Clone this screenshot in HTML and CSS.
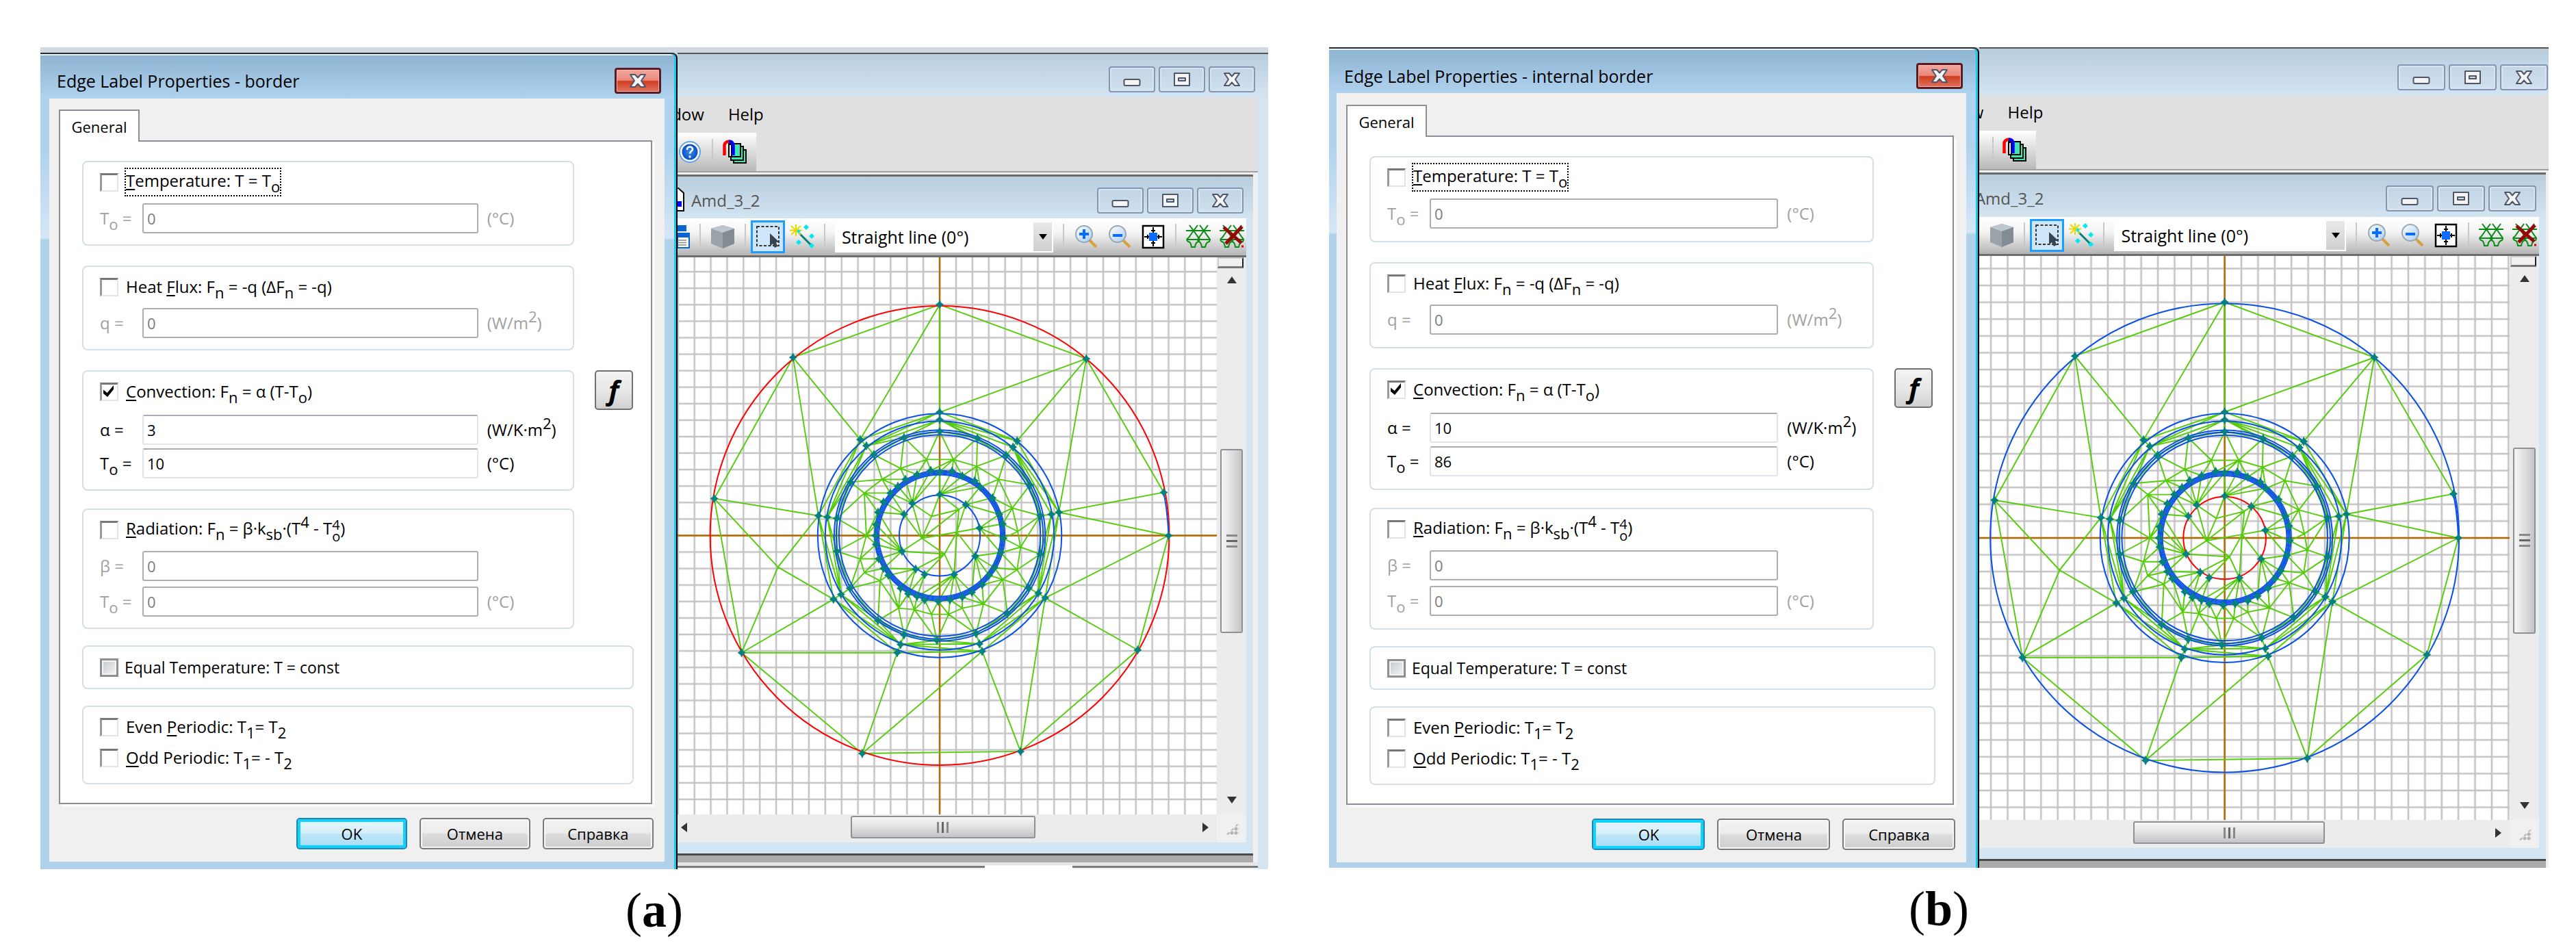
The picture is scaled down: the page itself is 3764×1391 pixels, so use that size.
FILE: index.html
```html
<!DOCTYPE html>
<html lang="ru">
<head>
<meta charset="utf-8">
<title>Edge Label Properties</title>
<link rel="stylesheet" href="styles.css">
<script src="mesh.js" defer></script>
</head>
<body>
<svg class="defs" aria-hidden="true">
  <defs>
    <pattern id="grid" width="23.86" height="24.06" patternUnits="userSpaceOnUse">
      <path class="grid-line" d="M0 0H24M0 24.06H24M0 0V25M23.86 0V25"/>
    </pattern>
    <linearGradient id="lens" x1="0" y1="0" x2="1" y2="1"><stop offset="0" stop-color="#fff"/><stop offset="1" stop-color="#a9cdf0"/></linearGradient>
    <radialGradient id="ball"><stop offset="0" stop-color="#3f8cf0"/><stop offset="1" stop-color="#0a4fc4"/></radialGradient>
    <symbol id="mesh" viewBox="-420 -420 840 840" overflow="visible"></symbol>
    <symbol id="min" viewBox="0 0 26 22"><rect x="1.500" y="11" width="23" height="9" rx="2" fill="#f4f4f4" stroke="#4f5668" stroke-width="2"/></symbol>
    <symbol id="max" viewBox="0 0 26 22"><path d="M2 2h22v18H2zM8 9v4h10V9z" fill="#f4f4f4" fill-rule="evenodd" stroke="#4f5668" stroke-width="2" stroke-linejoin="round"/></symbol>
    <symbol id="x" viewBox="0 0 26 22"><path d="M2 2h7l4 4.500L17 2h7l-6 9 6 9h-7l-4-4.500L9 20H2l6-9z" fill="#f4f4f4" stroke="#4f5668" stroke-width="2" stroke-linejoin="round"/></symbol>
    <symbol id="help" viewBox="0 0 36 36"><circle cx="18" cy="18" r="15" fill="#fff" stroke="#5fa4e8" stroke-width="2"/><circle cx="18" cy="18" r="11.500" fill="url(#ball)"/><path d="M14 15c0-6 8-5.500 8-1 0 3-4 3-4 6.500M18 23.500v3" fill="none" stroke="#fff" stroke-width="2.600"/></symbol>
    <symbol id="layers" viewBox="0 0 36 36"><g fill="#40e8b4" stroke="#000" stroke-width="2"><path d="M16 15h18v19H16z"/><path d="M12 10h18v20H12z"/><path d="M9 6h17v19H9z"/><path d="M9 7h4v18H9z" fill="#fff"/></g><path d="M2.500 23V8q1-5 7-5.500" fill="none" stroke="#f00" stroke-width="4.500"/><path d="M9 2.500q6 0 6.500 6V23" fill="none" stroke="#00f" stroke-width="4.500"/></symbol>
    <symbol id="doc" viewBox="0 0 12 36"><path d="M0 0l9 8v26H0" fill="#fff" stroke="#000" stroke-width="2"/><path d="M0 20h6v8H0z" fill="#00f"/></symbol>
    <symbol id="props" viewBox="0 0 18 36"><path d="M0 1h13v9H0z" fill="#0a64d2"/><path d="M0 13h17v21H0z" fill="#fff" stroke="#0a64d2" stroke-width="2"/><path d="M0 12h18v7H0z" fill="#0a64d2"/><path d="M0 23h13M0 26.500h13M0 30h13" stroke="#888" stroke-width="1.500"/></symbol>
    <symbol id="cube" viewBox="0 0 36 36"><path d="M18 1l17 5v22l-17 7-17-7V6z" fill="#9aa3a9"/><path d="M18 1l17 5-17 6L1 6z" fill="#bcc8ce"/><path d="M18 12l17-6v22l-17 7z" fill="#838c92"/></symbol>
    <symbol id="select" viewBox="0 0 36 36"><path d="M2 3h32v28H2z" fill="none" stroke="#333" stroke-width="2" stroke-dasharray="4 2.500"/><path d="M21 13v19l4-4 3 6 4-2-2-6h5z" fill="#38444f"/></symbol>
    <symbol id="wand" viewBox="0 0 36 36"><path d="M14 13l18 18" stroke="#008078" stroke-width="3"/><path d="M9 0v17M0 8.500h18M2 2l14 13M16 2L2 15" stroke="#e8d800" stroke-width="2"/><path d="M24 0l4 4-4 4-4-4zM32 13l4 4-4 4-4-4zM13 22l4 4-4 4-4-4zM32 27l4 4-4 4-4-4zM13 7l3 3-3 3-3-3z" fill="#00e8f0"/></symbol>
    <symbol id="zoomin" viewBox="0 0 34 36"><path d="M22 23l10 10" stroke="#d9a03c" stroke-width="4"/><circle cx="14" cy="14" r="12" fill="url(#lens)" stroke="#9aa8b4" stroke-width="2"/><path d="M14 7v14M7 14h14" stroke="#0a6cf8" stroke-width="4"/></symbol>
    <symbol id="zoomout" viewBox="0 0 34 36"><path d="M22 23l10 10" stroke="#d9a03c" stroke-width="4"/><circle cx="14" cy="14" r="12" fill="url(#lens)" stroke="#9aa8b4" stroke-width="2"/><path d="M7 16h14" stroke="#0a6cf8" stroke-width="4"/></symbol>
    <symbol id="fit" viewBox="0 0 34 36"><path d="M2 2h30v32H2z" fill="#fff" stroke="#000" stroke-width="2.500"/><path d="M17 4v28M4 18h26M14 9h6M14 27h6M9 15v6M25 15v6" fill="none" stroke="#000" stroke-width="2"/><path d="M11 12h12v12H11z" fill="#0a6cff"/></symbol>
    <symbol id="net" viewBox="0 0 36 36"><path d="M0 9h36M2 22h34M5 1l6 8 6-8M20 1l6 8 6-8M11 9l-7 10q-5 3-1 6 4 0 5 8h5q1-7 5-8 3-3 0-6zM26 9l-7 10q-3 3-1 6 4 0 5 8h5q1-7 6-8 2-3-1-6z" fill="none" stroke="#0a8c14" stroke-width="2"/></symbol>
    <symbol id="netx" viewBox="0 0 36 36"><use href="#net"/><path d="M6 4l26 23M33 3L9 28" stroke="#960808" stroke-width="5"/><path d="M32 32h3" stroke="#d00" stroke-width="3"/></symbol>
  </defs>
</svg>

<main class="page">
  <figure class="figure figure-a">
    <div class="shot">
      <section class="dialog">
        <header class="dialog-title"><h2>Edge Label Properties - border</h2>
          <button class="close" aria-label="Close"><svg><use href="#x"/></svg></button></header>
        <div class="dialog-body">
          <button class="tab">General</button>
          <div class="panel">
            <fieldset class="group">
              <label class="check"><input type="checkbox"><span class="focused"><u>T</u>emperature: T = T<sub>o</sub></span></label>
              <div class="field off"><label for="a1">T<sub>o</sub> =</label><input id="a1" value="0" disabled><span class="unit">(°C)</span></div>
            </fieldset>
            <fieldset class="group">
              <label class="check"><input type="checkbox"><span>Heat <u>F</u>lux: F<sub>n</sub> = -q (ΔF<sub>n</sub> = -q)</span></label>
              <div class="field off"><label for="a2">q =</label><input id="a2" value="0" disabled><span class="unit">(W/m<sup>2</sup>)</span></div>
            </fieldset>
            <div class="with-button">
              <fieldset class="group convection">
                <label class="check"><input type="checkbox" checked><span><u>C</u>onvection: F<sub>n</sub> = α (T-T<sub>o</sub>)</span></label>
                <div class="field"><label for="a3">α =</label><input id="a3" value="3"><span class="unit">(W/K·m<sup>2</sup>)</span></div>
                <div class="field"><label for="a4">T<sub>o</sub> =</label><input id="a4" value="10"><span class="unit">(°C)</span></div>
              </fieldset>
              <button class="fx">f</button>
            </div>
            <fieldset class="group radiation">
              <label class="check"><input type="checkbox"><span><u>R</u>adiation: F<sub>n</sub> = β·k<sub>sb</sub>·(T<sup>4</sup> - T<span class="stack"><span>4</span><span>o</span></span>)</span></label>
              <div class="field off"><label for="a5">β =</label><input id="a5" value="0" disabled><span class="unit"></span></div>
              <div class="field off"><label for="a6">T<sub>o</sub> =</label><input id="a6" value="0" disabled><span class="unit">(°C)</span></div>
            </fieldset>
            <fieldset class="group wide equal">
              <label class="check mixed"><input type="checkbox"><span>Equal Temperature: T = const</span></label>
            </fieldset>
            <fieldset class="group wide periodic">
              <label class="check"><input type="checkbox"><span>Even <u>P</u>eriodic: T<sub>1</sub>= T<sub>2</sub></span></label>
              <label class="check"><input type="checkbox"><span><u>O</u>dd Periodic: T<sub>1</sub>= - T<sub>2</sub></span></label>
            </fieldset>
          </div>
          <div class="actions"><button class="btn primary">OK</button><button class="btn">Отмена</button><button class="btn">Справка</button></div>
        </div>
      </section>
      <section class="window">
        <header class="window-title"><div class="controls">
          <button aria-label="Minimize"><svg><use href="#min"/></svg></button><button aria-label="Maximize"><svg><use href="#max"/></svg></button><button aria-label="Close"><svg><use href="#x"/></svg></button></div></header>
        <div class="window-body">
          <nav class="menu"><a class="clipped" href="#">Window</a><a href="#">Help</a></nav>
          <div class="toolbar-top"><svg class="icon"><use href="#help"/></svg><i class="sep"></i><svg class="icon"><use href="#layers"/></svg></div>
          <div class="mdi">
            <div class="child">
              <header class="child-title"><svg class="doc-icon"><use href="#doc"/></svg><h3>Amd_3_2</h3><div class="controls">
                <button aria-label="Minimize"><svg><use href="#min"/></svg></button><button aria-label="Maximize"><svg><use href="#max"/></svg></button><button aria-label="Close"><svg><use href="#x"/></svg></button></div></header>
              <div class="child-body">
                <div class="toolbar"><svg class="props"><use href="#props"/></svg><i class="sep"></i><svg class="icon"><use href="#cube"/></svg><i class="sep"></i>
                  <button class="tool selected" aria-label="Select"><svg class="icon"><use href="#select"/></svg></button><svg class="icon wand"><use href="#wand"/></svg><i class="sep"></i>
                  <div class="combo"><select aria-label="Line"><option>Straight line (0°)</option></select></div><i class="sep"></i>
                  <div class="tools"><svg class="icon"><use href="#zoomin"/></svg><svg class="icon"><use href="#zoomout"/></svg><svg class="icon"><use href="#fit"/></svg></div><i class="sep"></i>
                  <div class="tools"><svg class="icon"><use href="#net"/></svg><svg class="icon"><use href="#netx"/></svg></div></div>
                <div class="view">
                  <div class="canvas"><svg viewBox="-383 -406 788 813" preserveAspectRatio="xMidYMid slice"><use href="#mesh" x="-420" y="-420" width="840" height="840"/></svg></div>
                  <div class="vbar"><i class="split"></i><i class="arrow up"></i><i class="thumb"></i><i class="arrow down"></i></div>
                  <div class="hbar"><i class="arrow left"></i><i class="thumb"></i><i class="arrow right"></i></div>
                  <div class="size-grip"></div>
                </div>
              </div>
            </div>
          </div>
          <div class="status"><i></i><i></i></div>
        </div>
      </section>
    </div>
    <figcaption>(<b>a</b>)</figcaption>
  </figure>

  <figure class="figure figure-b">
    <div class="shot">
      <section class="dialog">
        <header class="dialog-title"><h2>Edge Label Properties - internal border</h2>
          <button class="close" aria-label="Close"><svg><use href="#x"/></svg></button></header>
        <div class="dialog-body">
          <button class="tab">General</button>
          <div class="panel">
            <fieldset class="group">
              <label class="check"><input type="checkbox"><span class="focused"><u>T</u>emperature: T = T<sub>o</sub></span></label>
              <div class="field off"><label for="b1">T<sub>o</sub> =</label><input id="b1" value="0" disabled><span class="unit">(°C)</span></div>
            </fieldset>
            <fieldset class="group">
              <label class="check"><input type="checkbox"><span>Heat <u>F</u>lux: F<sub>n</sub> = -q (ΔF<sub>n</sub> = -q)</span></label>
              <div class="field off"><label for="b2">q =</label><input id="b2" value="0" disabled><span class="unit">(W/m<sup>2</sup>)</span></div>
            </fieldset>
            <div class="with-button">
              <fieldset class="group convection">
                <label class="check"><input type="checkbox" checked><span><u>C</u>onvection: F<sub>n</sub> = α (T-T<sub>o</sub>)</span></label>
                <div class="field"><label for="b3">α =</label><input id="b3" value="10"><span class="unit">(W/K·m<sup>2</sup>)</span></div>
                <div class="field"><label for="b4">T<sub>o</sub> =</label><input id="b4" value="86"><span class="unit">(°C)</span></div>
              </fieldset>
              <button class="fx">f</button>
            </div>
            <fieldset class="group radiation">
              <label class="check"><input type="checkbox"><span><u>R</u>adiation: F<sub>n</sub> = β·k<sub>sb</sub>·(T<sup>4</sup> - T<span class="stack"><span>4</span><span>o</span></span>)</span></label>
              <div class="field off"><label for="b5">β =</label><input id="b5" value="0" disabled><span class="unit"></span></div>
              <div class="field off"><label for="b6">T<sub>o</sub> =</label><input id="b6" value="0" disabled><span class="unit">(°C)</span></div>
            </fieldset>
            <fieldset class="group wide equal">
              <label class="check mixed"><input type="checkbox"><span>Equal Temperature: T = const</span></label>
            </fieldset>
            <fieldset class="group wide periodic">
              <label class="check"><input type="checkbox"><span>Even <u>P</u>eriodic: T<sub>1</sub>= T<sub>2</sub></span></label>
              <label class="check"><input type="checkbox"><span><u>O</u>dd Periodic: T<sub>1</sub>= - T<sub>2</sub></span></label>
            </fieldset>
          </div>
          <div class="actions"><button class="btn primary">OK</button><button class="btn">Отмена</button><button class="btn">Справка</button></div>
        </div>
      </section>
      <section class="window">
        <header class="window-title"><div class="controls">
          <button aria-label="Minimize"><svg><use href="#min"/></svg></button><button aria-label="Maximize"><svg><use href="#max"/></svg></button><button aria-label="Close"><svg><use href="#x"/></svg></button></div></header>
        <div class="window-body">
          <nav class="menu"><a class="clipped" href="#">Window</a><a href="#">Help</a></nav>
          <div class="toolbar-top"><i class="sep"></i><svg class="icon"><use href="#layers"/></svg></div>
          <div class="mdi">
            <div class="child">
              <header class="child-title"><h3>Amd_3_2</h3><div class="controls">
                <button aria-label="Minimize"><svg><use href="#min"/></svg></button><button aria-label="Maximize"><svg><use href="#max"/></svg></button><button aria-label="Close"><svg><use href="#x"/></svg></button></div></header>
              <div class="child-body">
                <div class="toolbar"><svg class="icon"><use href="#cube"/></svg><i class="sep"></i>
                  <button class="tool selected" aria-label="Select"><svg class="icon"><use href="#select"/></svg></button><svg class="icon wand"><use href="#wand"/></svg><i class="sep"></i>
                  <div class="combo"><select aria-label="Line"><option>Straight line (0°)</option></select></div><i class="sep"></i>
                  <div class="tools"><svg class="icon"><use href="#zoomin"/></svg><svg class="icon"><use href="#zoomout"/></svg><svg class="icon"><use href="#fit"/></svg></div><i class="sep"></i>
                  <div class="tools"><svg class="icon"><use href="#net"/></svg><svg class="icon"><use href="#netx"/></svg></div></div>
                <div class="view">
                  <div class="canvas"><svg viewBox="-351 -403 758 806" preserveAspectRatio="xMidYMid slice"><use href="#mesh" x="-420" y="-420" width="840" height="840"/></svg></div>
                  <div class="vbar"><i class="split"></i><i class="arrow up"></i><i class="thumb"></i><i class="arrow down"></i></div>
                  <div class="hbar"><i class="thumb"></i><i class="arrow right"></i></div>
                  <div class="size-grip"></div>
                </div>
              </div>
            </div>
          </div>
        </div>
      </section>
    </div>
    <figcaption>(<b>b</b>)</figcaption>
  </figure>
</main>
</body>
</html>
```

FILE: styles.css
```css
* { box-sizing: border-box; }
body { margin: 0; background: #fff; color: #000; font: 22px/32px "Open Sans", "Noto Sans", sans-serif; }
button, input, select { margin: 0; padding: 0; font: inherit; color: inherit; border-radius: 0; }
h2, h3, figure { margin: 0; font: inherit; }
a { color: inherit; text-decoration: none; }
svg { display: block; }
.defs { position: absolute; width: 0; height: 0; }

.page { display: flex; align-items: flex-start; gap: 89px; padding: 69px 40px 0 59px; }
.figure { flex: 1794 1 0; min-width: 0; }
.figure-b { flex-grow: 1782; }
.shot { display: flex; background: #d2d8e0; }
.figure-a .shot { padding-top: 8px; }
figcaption { margin-top: 16px; text-align: center; font: 72px/88px "Liberation Serif", serif; }

/* property dialog */
.dialog {
  --foot: 16px;
  flex: none; width: calc(52% - 2px); padding: 0 17px 11px 13px; border-top: 2px solid #2b2b2b; border-right: 2px solid #000;
  background: linear-gradient(#8db4d2, #afd2ee 65px, #afd2ee 140px, #d5e7f6 268px, #afd2ea 272px);
  box-shadow: inset -3px 0 #22c6e8, inset 0 2px #e8f3fb; border-top-right-radius: 8px;
}
.figure-b .dialog { --foot: 18px; width: calc(53% + 6px); padding: 0 17px 8px 11px; }
.dialog-title { display: flex; justify-content: space-between; align-items: center; height: 65px; padding: 13px 5px 0 11px; font-size: 25px; }
.figure-b .dialog-title { padding-top: 14px; }
.close { display: grid; place-items: center; width: 68px; height: 38px; border: 3px solid #5c1a22; border-radius: 4px; background: linear-gradient(#f4a79d, #e8877a 48%, #cf3d20 52%, #e2705c); box-shadow: inset 0 0 0 1px #f7b9b0; }
.close svg, .controls svg { width: 26px; height: 22px; }
.dialog-body { padding: 16px 18px 18px 14px; background: #f0f0f0; }
.figure-b .dialog-body { padding-top: 17px; }
.tab { display: block; width: 118px; height: 47px; margin-bottom: -2px; position: relative; border: 2px solid #8c8e97; border-bottom: 0; background: #fff; }
.panel { display: flex; flex-direction: column; align-items: flex-start; padding: 28px 0 27px 32px; border: 2px solid #8c8e97; background: #fff; box-shadow: 4px 4px #fafafa; }

.group { width: 86.5%; min-width: 0; margin: 0 0 29px; padding: 13px 0 var(--foot) 24px; border: 2px solid #d3e0e6; border-radius: 8px; font-size: 24px; }
.with-button { display: flex; align-items: flex-start; gap: 30px; width: 100%; margin-bottom: 26px; }
.with-button .group { flex: none; margin: 0; }
.convection .check { margin-bottom: 18px; }
.convection .field + .field { margin-top: 5px; }
.radiation { margin-bottom: 24px; }
.radiation .field + .field { margin-top: 8px; }
.wide { width: 97%; margin-bottom: 24px; }
.equal { padding: 14px 0 14px 24px; font-size: 23px; }
.equal .check { margin: 0; gap: 9px; }
.periodic { margin-bottom: 0; padding-bottom: 21px; }
.periodic .check { margin: 0; }
.periodic .check + .check { margin-top: 13px; }

.check { display: flex; align-items: center; gap: 11px; height: 32px; margin-bottom: 15px; white-space: nowrap; }
.check input { appearance: none; flex: none; width: 27px; height: 27px; border: 2px solid #e4e4e4; border-top: 3px solid #777; border-left: 3px solid #999; background: #fff; }
.check input:checked::before { content: ""; display: block; width: 20px; height: 20px; background: #000; clip-path: polygon(10% 40%, 38% 62%, 85% 8%, 85% 38%, 40% 92%, 10% 68%); }
.check.mixed input { border: 3px solid #8f8f8f; background: linear-gradient(135deg, #c4c9cf, #f4f4f4); box-shadow: inset 0 0 0 2px #f4f4f4; }
.focused { height: 38px; line-height: 34px; outline: 2px dotted #000; }
u { text-decoration-thickness: 2px; text-underline-offset: 3px; }
sub, sup { font-size: 22px; line-height: 0; vertical-align: -8px; }
sup { vertical-align: 10px; }
.stack { display: inline-flex; flex-direction: column; vertical-align: middle; font-size: 20px; line-height: 17px; }

.field { display: flex; align-items: center; height: 44px; }
.field label { width: 62px; white-space: nowrap; }
.field input { flex: 1; min-width: 0; height: 44px; padding: 0 5px; border: 2px solid #dfe5ec; border-top-color: #a9acb4; border-radius: 3px; background: #fff; font-size: 22px; }
.unit { width: 138px; padding-left: 13px; white-space: nowrap; }
.off { color: #a0a0a0; }
.off input { border-color: #adadad; color: #7c7c7c; }
.fx { flex: none; width: 56px; height: 58px; border: 2px solid #707070; border-radius: 5px; background: linear-gradient(#f3f3f3, #e8e8e8 50%, #d0d0d0); font: italic bold 40px/40px "Noto Sans", sans-serif; }

.actions { display: flex; justify-content: flex-end; gap: 18px; margin: 20px -2px 0 0; }
.btn { width: 162px; height: 46px; border: 2px solid #7a7a7a; border-radius: 5px; background: linear-gradient(#f3f3f3, #ebebeb 48%, #dcdcdc 52%, #cecece); box-shadow: inset 0 0 0 2px #f6f6f6; }
.figure-b .btn { width: 165px; }
.primary { border-color: #1f86b5; background: linear-gradient(#e6f6fd, #d6effb 48%, #bfe6f9 52%, #a6dcf4); box-shadow: inset 0 0 0 4px #12d2fb; }

/* application window */
.window { flex: 1; min-width: 0; display: flex; flex-direction: column; border-top: 2px solid #555; background: #d3e4f2; padding-right: 15px; overflow: hidden; }
.figure-b .window { padding-right: 0; }
.window-title { flex: none; height: 63px; margin-right: -15px; padding: 18px 19px 0 0; background: linear-gradient(#b9cddc, #d3e4f2); }
.figure-b .window-title { height: 68px; margin: 0; padding: 23px 1px 0 0; }
.controls { display: flex; justify-content: flex-end; gap: 5px; margin-left: auto; }
.controls button { display: grid; place-items: center; width: 68px; height: 38px; border: 2px solid #8496b4; border-radius: 4px; background: transparent; box-shadow: inset 0 0 0 2px #d9e6f2; }
.figure-b .controls button { width: 70px; }
.window-body { flex: 1; display: flex; flex-direction: column; min-height: 0; background: #e0e0e0; }
.menu { display: flex; gap: 35px; height: 52px; line-height: 50px; font-size: 24px; }
.clipped { display: flex; justify-content: flex-end; width: 39px; overflow: hidden; }
.figure-b .clipped { width: 6px; }
.toolbar-top { display: flex; align-items: center; gap: 14px; width: 115px; height: 56px; background: linear-gradient(#fff, #b9b9b9); }
.figure-b .toolbar-top { width: 83px; padding-left: 19px; gap: 13px; }
.icon { flex: none; width: 36px; height: 36px; }
.sep { flex: none; width: 2px; height: 38px; margin: 0 14px; background: #c8c8c8; }
.toolbar-top .sep { margin: 0; }
.mdi { flex: 1; min-height: 0; display: flex; flex-direction: column; border-top: 2px solid #a0a0a0; padding: 3px 7px 0 0; background: #f0f0f0; }
.figure-b .mdi { padding-right: 4px; }
.child { flex: 1; min-height: 0; display: flex; flex-direction: column; padding: 0 10px 16px 0; border-top: 3px solid #696969; border-bottom: 3px solid #4a4a4a; background: #d3e4f2; }
.mdi::after { content: ""; height: 10px; background: #ababab; }
.child-title { flex: none; display: flex; height: 61px; margin-right: -10px; padding: 16px 14px 0 0; color: #555; font-size: 24px; background: linear-gradient(#b9cddc, #d3e4f2); }
.figure-b .child-title { height: 62px; }
.child-title h3 { flex: none; padding: 3px 0 0 8px; }
.doc-icon { width: 12px; height: 36px; }
.figure-b .child-title h3 { display: flex; justify-content: flex-end; width: 94px; padding-left: 0; overflow: hidden; }
.child-body { flex: 1; min-height: 0; display: flex; flex-direction: column; background: #f0f0f0; }
.toolbar { flex: none; display: flex; align-items: center; height: 57px; padding-right: 3px; border-bottom: 3px solid #6e6e6e; background: linear-gradient(#fff, #f4f4f4 40%, #b4b4b4); }
.figure-b .toolbar { padding-left: 15px; }
.props { flex: none; width: 18px; height: 36px; }
.tool { display: grid; place-items: center; width: 50px; height: 48px; margin: 0 7px 0 -7px; border: 3px solid #1e9cff; background: #cde6f9; }
.combo { flex: 1; min-width: 0; display: grid; align-items: center; }
.combo select, .combo::after { grid-area: 1 / 1; }
.combo select { appearance: none; width: 100%; height: 46px; padding-left: 10px; border: 0; font-size: 25px; background: linear-gradient(#e8e8e8, #cfcfcf) right 2px center / 27px 42px no-repeat #fff; }
.combo::after { content: ""; justify-self: end; margin-right: 9px; border: 6px solid transparent; border-top: 8px solid #000; border-bottom: 0; pointer-events: none; }
.tools { display: flex; gap: 13px; }

.view { flex: 1; min-height: 0; display: grid; grid-template: 1fr 41px / 1fr 43px; }
.canvas { contain: size; overflow: hidden; background: #fff; }
.canvas svg { width: 100%; height: 100%; }
.vbar { display: flex; flex-direction: column; align-items: center; background: #ececec; }
.hbar { display: flex; align-items: center; padding: 0 12px 4px 5px; background: #ececec; }
.arrow { flex: none; border: 7px solid transparent; }
.up { margin-top: 12px; border-bottom-color: #333; border-top: 0; border-bottom-width: 10px; }
.down { margin: auto 0 16px; border-top-color: #333; border-bottom: 0; border-top-width: 10px; }
.left { border-right-color: #333; border-left: 0; border-right-width: 9px; }
.right { margin-left: auto; border-left-color: #333; border-right: 0; border-left-width: 9px; }
.split { flex: none; width: 38px; height: 16px; margin-right: 4px; border: 2px outset #ccc; border-right-color: #777; border-bottom: 3px solid #777; background: #f0f0f0; }
.thumb { flex: none; border: 2px solid #8f8f96; border-radius: 3px; }
.vbar .thumb { width: 33px; height: 33%; margin-top: 242px; background: linear-gradient(#666, #666) center / 16px 3px no-repeat, linear-gradient(#888, #888) center calc(50% - 8px) / 16px 3px no-repeat, linear-gradient(#888, #888) center calc(50% + 8px) / 16px 3px no-repeat, linear-gradient(90deg, #f6f6f6, #e0e0e0 50%, #c4c4c8); }
.hbar .thumb { width: 35%; height: 33px; margin-left: 31%; background: linear-gradient(#666, #666) center / 3px 16px no-repeat, linear-gradient(#888, #888) calc(50% - 7px) center / 3px 16px no-repeat, linear-gradient(#888, #888) calc(50% + 7px) center / 3px 16px no-repeat, linear-gradient(#f6f6f6, #e0e0e0 50%, #c4c4c8); }
.figure-b .hbar .thumb { width: 37%; margin-left: 29%; }
.size-grip { margin: 12px 11px 11px 13px; background: radial-gradient(circle, #b4b4b4 2px, transparent 3px) 0 0 / 6px 6px; clip-path: polygon(100% 0, 100% 100%, 0 100%); }
.status { display: flex; justify-content: space-between; flex: none; height: 10px; padding-top: 5px; background: linear-gradient(#e6e6e6 4px, #fff 5px); }
.status i { width: 53%; border-top: 3px solid #7a7a7a; background: #f0f0f0; }
.status i + i { width: 32%; }

/* finite element drawing */
.grid-line { fill: none; stroke: #c3c3c3; stroke-width: 2.500; }
.axis { stroke: #b36b00; stroke-width: 2.400; }
.edges { fill: none; stroke: #54cc0a; stroke-width: 1.900; }
.arcs { fill: none; stroke: #0a50e6; stroke-width: 2; }
.outer { stroke: var(--outer); }
.inner { stroke: var(--inner); }
.nodes { fill: #068080; }
.figure-a { --outer: #f00; --inner: #0a50e6; }
.figure-b { --outer: #0a50e6; --inner: #f00; }
```

FILE: mesh.js
```js
// Node coordinates of the finite element mesh, relative to the axis origin.
const outer = [[0,-337],[214,-258],[327,-63],[334,0],[289,167],[118,315],[-113,318],[-289,171],[-329,-54],[-214,-260]];
const ring1 = [[0,-180],[113,-138],[174,-34],[154,91],[62,169],[-62,171],[-155,93],[-177,-29],[-116,-140]];
const ring2 = [[0,-169],[107,-129],[163,-31],[144,84],[58,158],[-57,159],[-144,86],[-164,-27],[-107,-131]];
const ring3 = [[0,-152],[55,-142],[97,-117],[132,-74],[147,-29],[147,27],[130,77],[99,114],[53,143],[-4,153],[-52,145],[-90,124],[-131,77],[-150,23],[-150,-25],[-130,-78],[-96,-118],[-52,-143]];
const middle = [[20,-111],[54,-101],[86,-82],[106,-40],[114,-6],[118,17],[113,50],[92,64],[64,100],[33,106],[13,115],[-12,115],[-37,108],[-60,106],[-87,66],[-110,54],[-116,34],[-107,0],[-110,-62],[-84,-82],[-57,-98],[-19,-111]];
const ring4 = [[0,-93],[18,-94],[33,-87],[51,-80],[59,-71],[77,-55],[87,-31],[92,-17],[93,4],[89,25],[80,47],[72,58],[62,72],[47,83],[33,90],[15,94],[-2,96],[-22,94],[-33,89],[-46,85],[-57,77],[-75,58],[-82,48],[-89,34],[-93,13],[-94,0],[-93,-16],[-90,-34],[-82,-49],[-72,-62],[-61,-72],[-50,-82],[-33,-89],[-13,-95]];
const ring5 = [[0,-60],[38,-45],[58,-11],[52,30],[21,57],[-22,57],[-35,49],[-55,23],[-52,-31],[-40,-47]];
const core = [[28,-38],[25,-5],[7,27],[-26,4],[-12,-28]];

const angle = p => (Math.atan2(p[0], -p[1]) + 2 * Math.PI) % (2 * Math.PI);
const line = (a, b) => `M${a}L${b}`;
const polygon = ring => `M${ring.join('L')}Z`;

// Triangulated strip between two rings: always step the ring that is behind in angle.
function strip(a, b) {
  a = [...a].sort((p, q) => angle(p) - angle(q));
  b = [...b].sort((p, q) => angle(p) - angle(q));
  let i = 0, j = 0, d = line(a[0], b[0]);
  while (i < a.length || j < b.length) {
    const next = (ring, k) => k < ring.length - 1 ? angle(ring[k + 1]) : k < ring.length ? 7 : 9;
    if (next(a, i) <= next(b, j)) i++; else j++;
    d += line(a[i % a.length], b[j % b.length]);
  }
  return d;
}

const [A, B, J, I, H, G, F, E, D, C] = outer;
const [a, b, i, h, g, f, e, d, c] = ring1;
const K = [-236, 46];
const links = [[A,B],[A,C],[A,a],[A,c],[B,a],[B,b],[B,i],[B,J],[C,c],[C,d],[C,D],[D,d],[D,E],[D,K],[K,d],[K,E],[K,e],
  [E,e],[E,f],[E,F],[F,f],[F,g],[F,G],[G,g],[G,h],[G,H],[H,h],[H,I],[I,h],[I,i],[J,i]];

const edges = links.map(l => line(...l)).join('')
  + [ring1, ring2, ring3, middle, ring4, core].map(polygon).join('')
  + strip(ring1, ring2) + strip(ring2, ring3) + strip(ring3, middle)
  + strip(middle, ring4) + strip(ring4, ring5) + strip(ring5, core) + line(core[0], core[3]) + line(core[1], core[3]);

const diamond = ([x, y]) => `M${x} ${y - 7}l2 4 4 3-4 3-2 4-2-4-4-3 4-3z`;
const nodes = [outer, ring1, ring2, ring3, ring4, ring5].flat().map(diamond).join('');
const circles = [178, 167, 154, 151, 147, 95, 93, 91, 89].map(r => `<circle r="${r}"/>`).join('');

document.getElementById('mesh').innerHTML = `
  <rect x="-480" y="-480" width="960" height="960" fill="url(#grid)"/>
  <path class="axis" d="M-480 0H480M0-480V480"/>
  <path class="edges" d="${edges}"/>
  <g class="arcs">${circles}<circle class="outer" r="335"/><path d="M327-63Q333-32 334 0"/><circle class="inner" r="59"/></g>
  <path class="nodes" d="${nodes}"/>`;
```
